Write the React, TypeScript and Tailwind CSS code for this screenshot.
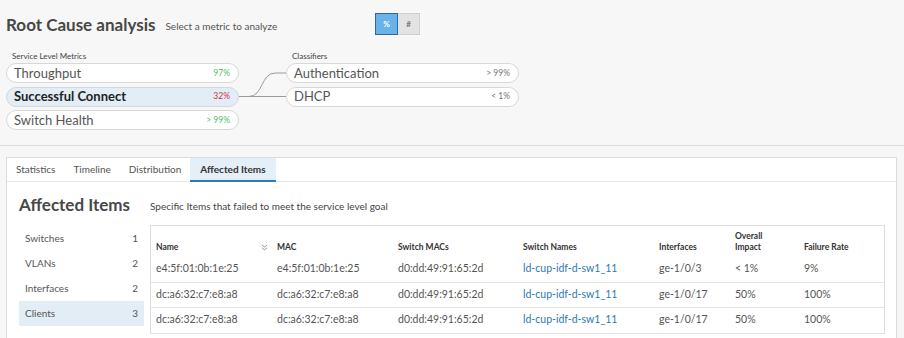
import React from 'react';

const metrics = [
  { label: 'Throughput', value: '97%', tone: 'text-[#4cbf6b]', active: false },
  { label: 'Successful Connect', value: '32%', tone: 'text-[#d2343f]', active: true },
  { label: 'Switch Health', value: '> 99%', tone: 'text-[#4cbf6b]', active: false },
];

const classifiers = [
  { label: 'Authentication', value: '> 99%' },
  { label: 'DHCP', value: '< 1%' },
];

const sideItems = [
  { label: 'Switches', count: 1 },
  { label: 'VLANs', count: 2 },
  { label: 'Interfaces', count: 2 },
  { label: 'Clients', count: 3, active: true },
];

const rows = [
  { name: 'e4:5f:01:0b:1e:25', mac: 'e4:5f:01:0b:1e:25', sw: 'd0:dd:49:91:65:2d', swName: 'ld-cup-idf-d-sw1_11', iface: 'ge-1/0/3', impact: '< 1%', rate: '9%' },
  { name: 'dc:a6:32:c7:e8:a8', mac: 'dc:a6:32:c7:e8:a8', sw: 'd0:dd:49:91:65:2d', swName: 'ld-cup-idf-d-sw1_11', iface: 'ge-1/0/17', impact: '50%', rate: '100%' },
  { name: 'dc:a6:32:c7:e8:a8', mac: 'dc:a6:32:c7:e8:a8', sw: 'd0:dd:49:91:65:2d', swName: 'ld-cup-idf-d-sw1_11', iface: 'ge-1/0/17', impact: '50%', rate: '100%' },
];

// column widths of the affected items table
const cols = ['w-[120px]', 'w-[121px]', 'w-[125px]', 'w-[136px]', 'w-[76px]', 'w-[69px]', 'flex-1'];

function SortIcon() {
  return (
    <svg width="7" height="7" viewBox="0 0 7 7" fill="none" stroke="#888" strokeWidth="0.9">
      <path d="M1 1l2.5 2 2.5-2" />
      <path d="M1 3.8l2.5 2 2.5-2" />
    </svg>
  );
}

const App: React.FC = () => {
  return (
    <div className="w-[904px] h-[338px] overflow-hidden bg-[#f7f7f7] text-[#444] font-['Lato',sans-serif]">
      {/* Header */}
      <div className="flex items-center pt-[13px] h-[35px]">
        <div className="w-[375px] pl-[6px] flex items-center mt-[2px]">
          <h1 className="text-[17px] leading-[22px] font-bold text-[#474747]">Root Cause analysis</h1>
          <span className="ml-[10px] mt-[2px] text-[10px] text-[#555]">Select a metric to analyze</span>
        </div>
        <div className="flex h-[22px]">
          <button className="w-[23px] h-full bg-[#69b3ea] border border-[#2c6aa3] text-white text-[8px] font-bold">%</button>
          <button className="w-[22px] h-full bg-[#e3e3e3] border border-l-0 border-[#cfcfcf] text-[#777] text-[8px] font-bold">#</button>
        </div>
      </div>

      {/* Metrics and classifiers */}
      <div className="mt-[16px] pl-[6px] pb-[15px] border-b border-[#dedede]">
        <div className="flex text-[8px] leading-[10px] text-[#444]">
          <div className="w-[233px] pl-[6px]">Service Level Metrics</div>
          <div className="w-[47px]" />
          <div className="pl-[6px]">Classifiers</div>
        </div>
        <div className="flex mt-[2px]">
          <div className="w-[233px] flex flex-col gap-[3.5px]">
            {metrics.map((m) => (
              <div
                key={m.label}
                className={`h-[20px] rounded-full border flex items-center justify-between pl-[7px] pr-[8px] ${m.active ? 'bg-[#e3edf6] border-[#d3d9df]' : 'bg-white border-[#d8d8d8]'}`}
              >
                <span className={`text-[13px] leading-none ${m.active ? 'font-bold text-[#222]' : 'text-[#555]'}`}>{m.label}</span>
                <span className={`text-[8.5px] ${m.tone}`}>{m.value}</span>
              </div>
            ))}
          </div>
          <svg width="47" height="67" viewBox="0 0 47 67" fill="none" stroke="#9a9a9a" strokeWidth="1">
            <path d="M0 33.5H10C24 33.5 22 10 36 10H47" />
            <path d="M0 33.5H47" />
          </svg>
          <div className="w-[233px] flex flex-col gap-[3.5px]">
            {classifiers.map((c) => (
              <div key={c.label} className="h-[20px] rounded-full border bg-white border-[#d8d8d8] flex items-center justify-between pl-[7px] pr-[8px]">
                <span className="text-[13px] leading-none text-[#555]">{c.label}</span>
                <span className="text-[8.5px] text-[#777]">{c.value}</span>
              </div>
            ))}
          </div>
        </div>
      </div>

      {/* Detail card */}
      <div className="mt-[11px] ml-[6px] w-[891px] h-[200px] bg-white border border-[#dcdcdc]">
        <div className="flex h-[24px] border-b border-[#e6e6e6] text-[10px] text-[#555]">
          <div className="px-[9px] flex items-center">Statistics</div>
          <div className="px-[9px] flex items-center">Timeline</div>
          <div className="px-[9px] flex items-center">Distribution</div>
          <div className="px-[10px] flex items-center bg-[#e5eff8] border-b-2 border-[#2a7bbd] font-bold text-[#333] mb-[-1px]">Affected Items</div>
        </div>

        <div className="pl-[12px] pt-[11px]">
          <div className="flex items-center h-[24px]">
            <h2 className="w-[131px] text-[17px] font-bold text-[#474747]">Affected Items</h2>
            <p className="text-[10px] text-[#444] mt-[2px]">Specific Items that failed to meet the service level goal</p>
          </div>

          <div className="flex mt-[8px]">
            <div className="w-[125px] mr-[6px] mt-[1px] text-[10px] text-[#555]">
              {sideItems.map((s) => (
                <div key={s.label} className={`h-[25px] flex items-center justify-between pl-[6px] pr-[6px] ${s.active ? 'bg-[#e3edf6]' : ''}`}>
                  <span>{s.label}</span>
                  <span>{s.count}</span>
                </div>
              ))}
            </div>

            <div className="w-[735px] border border-[#dddddd] border-b-0">
              <div className="flex h-[31px] items-end pb-[4.5px] text-[8.5px] leading-[11px] font-bold text-[#333]">
                <div className={`${cols[0]} pl-[5px] pr-[3px] flex items-end justify-between`}>
                  <span>Name</span>
                  <span className="mb-[2px]"><SortIcon /></span>
                </div>
                <div className={`${cols[1]} pl-[6px]`}>MAC</div>
                <div className={`${cols[2]} pl-[6px]`}>Switch MACs</div>
                <div className={`${cols[3]} pl-[6px]`}>Switch Names</div>
                <div className={`${cols[4]} pl-[6px]`}>Interfaces</div>
                <div className={`${cols[5]} pl-[6px]`}>Overall<br />Impact</div>
                <div className={`${cols[6]} pl-[6px]`}>Failure Rate</div>
              </div>
              {rows.map((r, i) => (
                <div key={i} className="flex h-[25.5px] items-center border-b border-[#e4e4e4] text-[10.5px] text-[#555]">
                  <div className={`${cols[0]} pl-[5px]`}>{r.name}</div>
                  <div className={`${cols[1]} pl-[6px]`}>{r.mac}</div>
                  <div className={`${cols[2]} pl-[6px]`}>{r.sw}</div>
                  <div className={`${cols[3]} pl-[6px] text-[#2b78b8]`}>{r.swName}</div>
                  <div className={`${cols[4]} pl-[6px]`}>{r.iface}</div>
                  <div className={`${cols[5]} pl-[6px]`}>{r.impact}</div>
                  <div className={`${cols[6]} pl-[6px]`}>{r.rate}</div>
                </div>
              ))}
            </div>
          </div>
        </div>
      </div>
    </div>
  );
};

export default App;
